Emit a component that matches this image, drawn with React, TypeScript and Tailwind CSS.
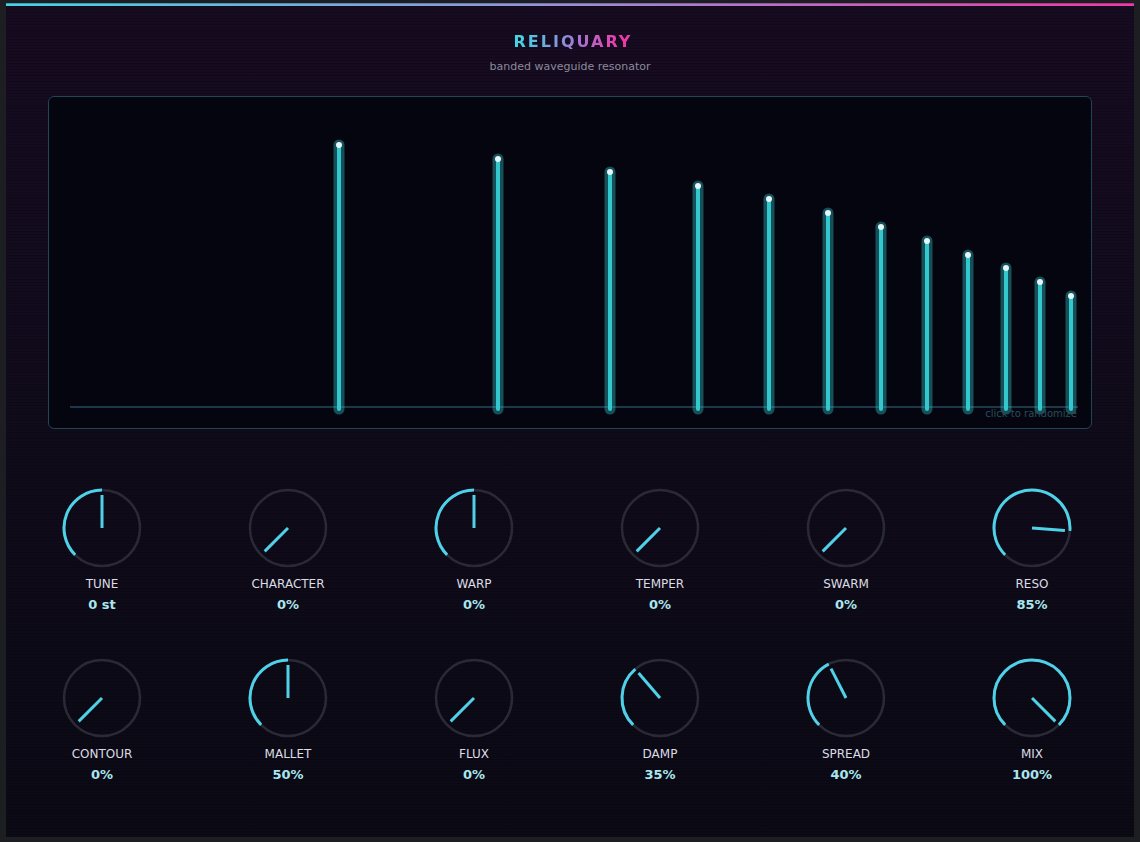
import React from "react";

// Harmonic partials: x / top in display-local pixels
const PARTIALS = [
  { x: 291, top: 49 },
  { x: 450, top: 63 },
  { x: 562, top: 76 },
  { x: 650, top: 90 },
  { x: 721, top: 103 },
  { x: 780, top: 117 },
  { x: 833, top: 131 },
  { x: 879, top: 145 },
  { x: 920, top: 159 },
  { x: 958, top: 172 },
  { x: 992, top: 186 },
  { x: 1023, top: 200 },
];

const KNOBS = [
  [
    { label: "TUNE", value: "0 st", pos: 0.5 },
    { label: "CHARACTER", value: "0%", pos: 0 },
    { label: "WARP", value: "0%", pos: 0.5 },
    { label: "TEMPER", value: "0%", pos: 0 },
    { label: "SWARM", value: "0%", pos: 0 },
    { label: "RESO", value: "85%", pos: 0.85 },
  ],
  [
    { label: "CONTOUR", value: "0%", pos: 0 },
    { label: "MALLET", value: "50%", pos: 0.5 },
    { label: "FLUX", value: "0%", pos: 0 },
    { label: "DAMP", value: "35%", pos: 0.35 },
    { label: "SPREAD", value: "40%", pos: 0.4 },
    { label: "MIX", value: "100%", pos: 1 },
  ],
];

const CYAN = "#4fd1e8";

function polar(cx: number, cy: number, r: number, deg: number) {
  const a = (deg * Math.PI) / 180;
  return { x: cx + r * Math.sin(a), y: cy - r * Math.cos(a) };
}

function Knob({ label, value, pos }: { label: string; value: string; pos: number }) {
  const c = 42;
  const r = 38;
  const start = -135;
  const end = start + pos * 270;
  const p0 = polar(c, c, r, start);
  const p1 = polar(c, c, r, end);
  const large = end - start > 180 ? 1 : 0;
  const tip = polar(c, c, 33, end);

  return (
    <div className="flex flex-col items-center">
      <svg width="84" height="84" viewBox="0 0 84 84">
        <circle cx={c} cy={c} r={r} fill="none" stroke="#2a2a36" strokeWidth="2.5" />
        {pos > 0 && (
          <path
            d={`M ${p0.x} ${p0.y} A ${r} ${r} 0 ${large} 1 ${p1.x} ${p1.y}`}
            fill="none"
            stroke={CYAN}
            strokeWidth="3"
          />
        )}
        <line x1={c} y1={c} x2={tip.x} y2={tip.y} stroke={CYAN} strokeWidth="3" />
      </svg>
      <span className="mt-[6px] text-[12px] leading-4 text-[#dcdce4]">{label}</span>
      <span className="mt-[5px] text-[13px] leading-4 font-bold text-[#a9e6f0]">{value}</span>
    </div>
  );
}

export default function App() {
  return (
    <div
      className="w-[1140px] h-[842px] bg-[#1d1e22] pt-[3px] pl-[6px] overflow-hidden"
      style={{ fontFamily: '"DejaVu Sans", Verdana, sans-serif' }}
    >
      <div className="relative w-[1128px] h-[834px] flex flex-col bg-[linear-gradient(180deg,#170b22_0%,#110b1c_45%,#0b0a15_100%)]">
        {/* scanlines */}
        <div className="absolute inset-0 pointer-events-none bg-[repeating-linear-gradient(180deg,rgba(0,0,0,0.22)_0px,rgba(0,0,0,0.22)_1px,transparent_1px,transparent_3px)]" />
        <div className="h-[3px] bg-[linear-gradient(90deg,#45d3e3,#9a8ed8_50%,#ee3aa8)]" />

        <div className="relative flex flex-col items-center pt-[26px]">
          <h1 className="text-[16px] leading-5 font-bold tracking-[2px] pl-[6px] bg-[linear-gradient(90deg,#45d3e3_10%,#a07ad6_55%,#ee3aa8_90%)] bg-clip-text text-transparent">
            RELIQUARY
          </h1>
          <p className="mt-2 text-[11px] leading-[14px] text-[#8c8a9a]">banded waveguide resonator</p>
        </div>

        {/* partial display */}
        <div className="relative mx-auto mt-[22px] w-[1044px] h-[333px] rounded-md border border-[#1e4656] bg-[#05050f]">
          <svg width="1042" height="331" viewBox="1 1 1042 331" className="block">
            <line x1="22" y1="311" x2="1030" y2="311" stroke="#1a3848" strokeWidth="2" />
            {PARTIALS.map((p) => (
              <g key={p.x}>
                <line
                  x1={p.x}
                  y1={p.top}
                  x2={p.x}
                  y2={313}
                  stroke="#2fb8bf"
                  strokeOpacity="0.42"
                  strokeWidth="11"
                  strokeLinecap="round"
                />
                <line x1={p.x} y1={p.top} x2={p.x} y2={313} stroke="#33c8ce" strokeWidth="4" strokeLinecap="round" />
                <circle cx={p.x} cy={p.top} r="3" fill="#e4f6fa" />
              </g>
            ))}
          </svg>
          <span className="absolute right-[14px] bottom-[8px] text-[10px] leading-3 text-[#2c4c5a]">
            click to randomize
          </span>
        </div>

        {/* knobs */}
        <div className="relative ml-[3px] mt-[57px] w-[1116px] flex flex-col gap-[43px]">
          {KNOBS.map((row, i) => (
            <div key={i} className="grid grid-cols-6">
              {row.map((k) => (
                <Knob key={k.label} {...k} />
              ))}
            </div>
          ))}
        </div>
      </div>
    </div>
  );
}
